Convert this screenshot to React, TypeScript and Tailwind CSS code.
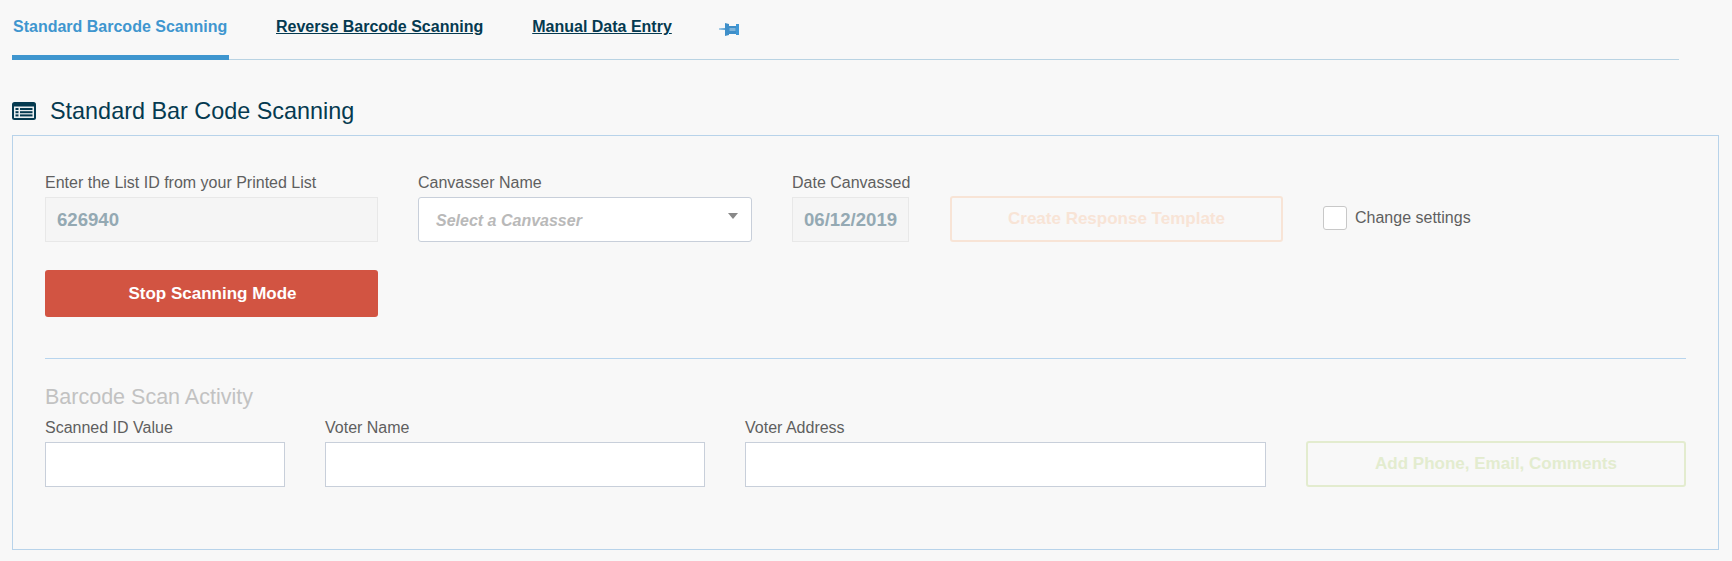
import React from "react";

const font = "font-['Liberation_Sans',Arial,sans-serif]";

function Label({ children }: { children: React.ReactNode }) {
  return <div className="text-[16px] leading-[22px] text-[#5f5f5f] h-[22px] whitespace-nowrap">{children}</div>;
}

function ReadOnly({ value, w }: { value: string; w: string }) {
  return (
    <div className={`${w} h-[45px] flex items-center px-[11px] pt-[1px] bg-[#f5f5f5] border border-[#e8e8e8] text-[18.6px] font-bold text-[#94a9b3] whitespace-nowrap`}>
      {value}
    </div>
  );
}

function TextBox({ w }: { w: string }) {
  return <div className={`${w} h-[45px] bg-white border border-[#c8cfda]`} />;
}

export default function App() {
  return (
    <div className={`${font} w-[1732px] h-[561px] bg-[#f8f8f8] overflow-hidden`}>
      {/* tabs */}
      <div className="ml-[12px] w-[1667px] h-[60px] border-b border-[#b9d3e3] flex items-start">
        <div className="w-[217px] h-[60px] border-b-[5px] border-[#3f96cf] pl-[1px] pt-[17px] text-[16px] leading-[20px] font-bold text-[#3f96cf]">
          Standard Barcode Scanning
        </div>
        <div className="ml-[47px] pt-[17px] text-[16px] leading-[20px] font-bold text-[#053a50] underline">Reverse Barcode Scanning</div>
        <div className="ml-[49px] pt-[17px] text-[16px] leading-[20px] font-bold text-[#053a50] underline">Manual Data Entry</div>
        <svg className="ml-[47px] mt-[22px]" width="21" height="15" viewBox="0 0 21 15">
          <path d="M0 6.6 L6 6 L6 8 L0 7.4 Z" fill="#5fa5d6" />
          <path d="M6 1 L10 2 L10 13 L6 14 Z" fill="#3f8fc9" />
          <rect x="10" y="4" width="7" height="8" fill="#3f8fc9" />
          <rect x="10.5" y="6" width="6" height="3" fill="#7fb4da" />
          <rect x="17" y="2" width="3" height="11" fill="#3f98d6" />
        </svg>
      </div>

      {/* heading */}
      <div className="ml-[12px] mt-[36px] h-[30px] flex items-center">
        <svg width="24" height="18" viewBox="0 0 24 18">
          <rect x="0" y="0" width="24" height="18" rx="2.5" fill="#053a50" />
          <rect x="2" y="4.5" width="20" height="11.5" fill="#e9eef0" />
          <rect x="3.5" y="6" width="3" height="2" fill="#053a50" />
          <rect x="3.5" y="9.2" width="3" height="2" fill="#053a50" />
          <rect x="3.5" y="12.4" width="3" height="2" fill="#053a50" />
          <rect x="8" y="6" width="12.5" height="2" fill="#053a50" />
          <rect x="8" y="9.2" width="12.5" height="2" fill="#053a50" />
          <rect x="8" y="12.4" width="12.5" height="2" fill="#053a50" />
        </svg>
        <div className="ml-[14px] text-[23.4px] leading-[30px] text-[#053a50]">Standard Bar Code Scanning</div>
      </div>

      {/* panel */}
      <div className="ml-[12px] mt-[9px] w-[1707px] h-[415px] border border-[#b8d3ea] pl-[32px] pr-[32px] pt-[36px]">
        <div className="flex items-start">
          <div className="w-[333px]">
            <Label>Enter the List ID from your Printed List</Label>
            <div className="mt-[3px]"><ReadOnly value="626940" w="w-[333px]" /></div>
          </div>
          <div className="ml-[40px] w-[334px]">
            <Label>Canvasser Name</Label>
            <div className="mt-[3px] relative w-[334px] h-[45px] bg-white border border-[#c8cfda] rounded-[3px] flex items-center pl-[17px] pt-[3px] text-[16px] italic font-bold text-[#b9b9b9]">
              Select a Canvasser
              <div className="absolute right-[13px] top-[15px] w-0 h-0 border-l-[5px] border-r-[5px] border-t-[6px] border-l-transparent border-r-transparent border-t-[#888888]" />
            </div>
          </div>
          <div className="ml-[40px] w-[117px]">
            <Label>Date Canvassed</Label>
            <div className="mt-[3px]"><ReadOnly value="06/12/2019" w="w-[117px]" /></div>
          </div>
          <div className="ml-[41px] mt-[24px] w-[333px] h-[46px] border-[2px] border-[#f8e4d6] rounded-[3px] flex items-center justify-center text-[17px] font-bold text-[#f8e4d6]">
            Create Response Template
          </div>
          <div className="ml-[40px] mt-[34px] flex items-center">
            <div className="w-[24px] h-[24px] bg-white border border-[#c8c8c8] rounded-[3px]" />
            <div className="ml-[8px] text-[16px] leading-[24px] text-[#5f5f5f]">Change settings</div>
          </div>
        </div>

        <div className="mt-[28px] w-[333px] h-[47px] bg-[#d25442] rounded-[3px] flex items-center justify-center pl-[2px] text-[17px] font-bold text-white">
          Stop Scanning Mode
        </div>

        <div className="mt-[41px] h-px bg-[#b8d5ee]" />

        <div className="mt-[25px] text-[21.5px] leading-[26px] text-[#c2c2c2]">Barcode Scan Activity</div>
        <div className="mt-[7px] flex items-start">
          <div className="w-[240px]">
            <Label>Scanned ID Value</Label>
            <div className="mt-[3px]"><TextBox w="w-[240px]" /></div>
          </div>
          <div className="ml-[40px] w-[380px]">
            <Label>Voter Name</Label>
            <div className="mt-[3px]"><TextBox w="w-[380px]" /></div>
          </div>
          <div className="ml-[40px] w-[521px]">
            <Label>Voter Address</Label>
            <div className="mt-[3px]"><TextBox w="w-[521px]" /></div>
          </div>
          <div className="ml-[40px] mt-[24px] w-[380px] h-[46px] border-[2px] border-[#e3eccf] rounded-[3px] flex items-center justify-center text-[17px] font-bold text-[#e3eccf]">
            Add Phone, Email, Comments
          </div>
        </div>
      </div>
    </div>
  );
}
